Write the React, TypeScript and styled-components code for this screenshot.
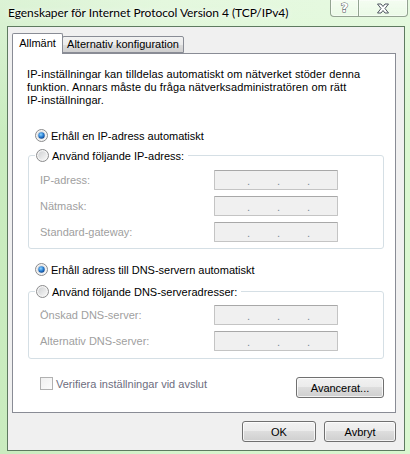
import styled, { createGlobalStyle } from "styled-components";

const GlobalStyle = createGlobalStyle`
  html, body {
    margin: 0;
    padding: 0;
    background: #cfeec6;
  }
  * {
    box-sizing: border-box;
  }
`;

const Window = styled.div`
  width: 410px;
  height: 454px;
  display: flex;
  flex-direction: column;
  padding: 0 5px 3px 7px;
  background:
    linear-gradient(180deg, rgba(255, 255, 255, 0.35) 0%, rgba(255, 255, 255, 0) 30%),
    linear-gradient(90deg, #c9ecbf 0%, #d6f4cd 40%, #d9f7d0 100%);
  font-family: "Liberation Sans", Arial, sans-serif;
  font-size: 11px;
  color: #000;
  overflow: hidden;
`;

const TitleBar = styled.div`
  height: 26px;
  display: flex;
  align-items: flex-start;
  justify-content: space-between;
`;

const Title = styled.div`
  padding: 5px 0 0 1px;
  font-family: Lato, "Noto Sans", sans-serif;
  font-size: 12px;
  letter-spacing: -0.05px;
  line-height: 16px;
  text-shadow: 0 0 6px rgba(255, 255, 255, 0.95), 0 0 2px rgba(255, 255, 255, 0.8);
`;

const CaptionButtons = styled.div`
  display: flex;
  margin-right: -3px;
`;

const CaptionButton = styled.div<{ $w: number; $first?: boolean }>`
  width: ${({ $w }) => $w}px;
  height: 17px;
  display: grid;
  place-items: center;
  border: 1px solid rgba(70, 90, 70, 0.55);
  border-top: none;
  border-left-width: ${({ $first }) => ($first ? 1 : 0)}px;
  border-radius: ${({ $first }) => ($first ? "0 0 0 4px" : "0 0 4px 0")};
  background: linear-gradient(180deg, rgba(255, 255, 255, 0.55), rgba(255, 255, 255, 0.25));
  box-shadow: inset 0 0 0 1px rgba(255, 255, 255, 0.45);
`;

const HelpGlyph = styled.span`
  font-family: "DejaVu Sans", sans-serif;
  font-weight: bold;
  font-size: 13px;
  line-height: 13px;
  color: #fff;
  -webkit-text-stroke: 1px #505860;
  paint-order: stroke fill;
  margin-top: -1px;
`;

const Client = styled.div`
  flex: 1;
  display: flex;
  flex-direction: column;
  background: #f0f0f0;
  border: 1px solid #5e7a60;
  padding: 6px 8px 8px 4px;
`;

const TabStrip = styled.div`
  display: flex;
  align-items: flex-end;
  height: 20px;
  position: relative;
  z-index: 1;
`;

const Tab = styled.div<{ $active?: boolean; $w: number }>`
  width: ${({ $w }) => $w}px;
  height: ${({ $active }) => ($active ? 21 : 17)}px;
  margin-bottom: ${({ $active }) => ($active ? -1 : 0)}px;
  margin-left: ${({ $active }) => ($active ? 0 : -1)}px;
  border: 1px solid #898c95;
  border-bottom: ${({ $active }) => ($active ? "none" : "1px solid #898c95")};
  border-radius: 2px 2px 0 0;
  background: ${({ $active }) =>
    $active ? "#fff" : "linear-gradient(180deg, #f2f2f2 0%, #ebebeb 50%, #dddddd 51%, #cfcfcf 100%)"};
  padding-top: ${({ $active }) => ($active ? 3 : 1)}px;
  text-align: center;
  line-height: 13px;
  position: relative;
  z-index: ${({ $active }) => ($active ? 2 : 1)};
`;

const Panel = styled.div`
  height: 360px;
  background: #fff;
  border: 1px solid #898c95;
  display: flex;
  flex-direction: column;
  padding: 14px 0 14px 0;
`;

const Intro = styled.p`
  margin: 0 0 20px 14px;
  line-height: 13px;
  letter-spacing: 0.1px;
  white-space: nowrap;
`;

const OptionRow = styled.label<{ $gap?: number }>`
  display: flex;
  align-items: center;
  height: 17px;
  margin-left: 22px;
  margin-top: ${({ $gap }) => $gap ?? 0}px;
  gap: 3px;
`;

const Group = styled.fieldset<{ $gap: number; $pt: number; $pb: number }>`
  margin: ${({ $gap }) => $gap}px 11px 0 15px;
  width: 356px;
  border: 1px solid #d5dfe5;
  border-radius: 3px;
  padding: ${({ $pt }) => $pt}px 0 ${({ $pb }) => $pb}px 11px;
  display: flex;
  flex-direction: column;
  gap: 6px;
`;

const Legend = styled.legend`
  margin-left: -5px;
  padding: 0 4px 0 1px;
  height: 17px;
  display: flex;
  align-items: center;
  gap: 3px;
`;

const FieldRow = styled.div`
  display: flex;
  align-items: center;
  height: 20px;
`;

const FieldLabel = styled.span`
  width: 174px;
  color: #a0a0a0;
`;

const IpField = styled.div`
  width: 124px;
  height: 20px;
  background: #f0f0f0;
  border: 1px solid #c4c4c4;
  border-top-color: #a8a8a8;
  border-radius: 1px;
  display: flex;
  align-items: flex-end;
  padding: 0 0 4px 31px;
`;

const IpDot = styled.span`
  width: 5px;
  margin-right: 25px;
  text-align: center;
  color: #7a8a9a;
  line-height: 8px;
  font-size: 11px;
`;

const Footer = styled.div`
  margin: 18px 11px 0 27px;
  display: flex;
  align-items: flex-start;
  justify-content: space-between;
`;

const CheckRow = styled.label`
  display: flex;
  align-items: center;
  gap: 3px;
  height: 13px;
  color: #6d6d80;
`;

const CheckBox = styled.span`
  width: 13px;
  height: 13px;
  border: 1px solid #b1b1b1;
  background: linear-gradient(135deg, #f0f0f0, #fcfcfc);
`;

const Button = styled.button<{ $w: number }>`
  width: ${({ $w }) => $w}px;
  height: 21px;
  border: 1px solid #707070;
  border-radius: 3px;
  background: linear-gradient(180deg, #f2f2f2 0%, #ebebeb 49%, #dddddd 50%, #cfcfcf 100%);
  box-shadow: inset 0 0 0 1px rgba(255, 255, 255, 0.75);
  font-family: "Liberation Sans", Arial, sans-serif;
  font-size: 11px;
  color: #000;
  padding: 0;
`;

const DialogButtons = styled.div`
  margin-top: 8px;
  display: flex;
  justify-content: flex-end;
  gap: 8px;
`;

function Radio({ checked }: { checked?: boolean }) {
  return (
    <svg width="13" height="13" viewBox="0 0 13 13">
      <defs>
        <linearGradient id="rb" x1="0" y1="0" x2="1" y2="1">
          <stop offset="0" stopColor="#cfd1d3" />
          <stop offset="1" stopColor="#f7f7f7" />
        </linearGradient>
        <radialGradient id="rdot" cx="0.4" cy="0.35" r="0.7">
          <stop offset="0" stopColor="#8fd6ff" />
          <stop offset="0.55" stopColor="#2a7fd4" />
          <stop offset="1" stopColor="#0b3f86" />
        </radialGradient>
      </defs>
      <circle cx="6.5" cy="6.5" r="6" fill="#f4f4f4" stroke="#8a8b8c" />
      <circle cx="6.5" cy="6.5" r="4.3" fill="url(#rb)" />
      {checked && <circle cx="6.5" cy="6.5" r="3.2" fill="url(#rdot)" />}
    </svg>
  );
}

function CloseGlyph() {
  return (
    <svg width="14" height="11" viewBox="0 0 14 11">
      <path
        d="M1.5 1 H5 L7 3.5 L9 1 H12.5 L9 5.5 L12.5 10 H9 L7 7.5 L5 10 H1.5 L5 5.5 Z"
        fill="#fff"
        stroke="#4f5760"
        strokeWidth="1"
        strokeLinejoin="round"
      />
    </svg>
  );
}

function Ip() {
  return (
    <IpField>
      <IpDot>.</IpDot>
      <IpDot>.</IpDot>
      <IpDot>.</IpDot>
    </IpField>
  );
}

export default function App() {
  return (
    <>
      <GlobalStyle />
      <Window>
        <TitleBar>
          <Title>Egenskaper för Internet Protocol Version 4 (TCP/IPv4)</Title>
          <CaptionButtons>
            <CaptionButton $w={29} $first>
              <HelpGlyph>?</HelpGlyph>
            </CaptionButton>
            <CaptionButton $w={49}>
              <CloseGlyph />
            </CaptionButton>
          </CaptionButtons>
        </TitleBar>
        <Client>
          <TabStrip>
            <Tab $active $w={51}>Allmänt</Tab>
            <Tab $w={122}>Alternativ konfiguration</Tab>
          </TabStrip>
          <Panel>
            <Intro>
              IP-inställningar kan tilldelas automatiskt om nätverket stöder denna
              <br />
              funktion. Annars måste du fråga nätverksadministratören om rätt
              <br />
              IP-inställningar.
            </Intro>
            <OptionRow>
              <Radio checked />
              Erhåll en IP-adress automatiskt
            </OptionRow>
            <Group $gap={3} $pt={6} $pb={6}>
              <Legend>
                <Radio />
                Använd följande IP-adress:
              </Legend>
              <FieldRow>
                <FieldLabel>IP-adress:</FieldLabel>
                <Ip />
              </FieldRow>
              <FieldRow>
                <FieldLabel>Nätmask:</FieldLabel>
                <Ip />
              </FieldRow>
              <FieldRow>
                <FieldLabel>Standard-gateway:</FieldLabel>
                <Ip />
              </FieldRow>
            </Group>
            <OptionRow $gap={12}>
              <Radio checked />
              Erhåll adress till DNS-servern automatiskt
            </OptionRow>
            <Group $gap={5} $pt={5} $pb={7}>
              <Legend>
                <Radio />
                Använd följande DNS-serveradresser:
              </Legend>
              <FieldRow>
                <FieldLabel>Önskad DNS-server:</FieldLabel>
                <Ip />
              </FieldRow>
              <FieldRow>
                <FieldLabel>Alternativ DNS-server:</FieldLabel>
                <Ip />
              </FieldRow>
            </Group>
            <Footer>
              <CheckRow>
                <CheckBox />
                Verifiera inställningar vid avslut
              </CheckRow>
              <Button $w={88}>Avancerat...</Button>
            </Footer>
          </Panel>
          <DialogButtons>
            <Button $w={74}>OK</Button>
            <Button $w={72}>Avbryt</Button>
          </DialogButtons>
        </Client>
      </Window>
    </>
  );
}
